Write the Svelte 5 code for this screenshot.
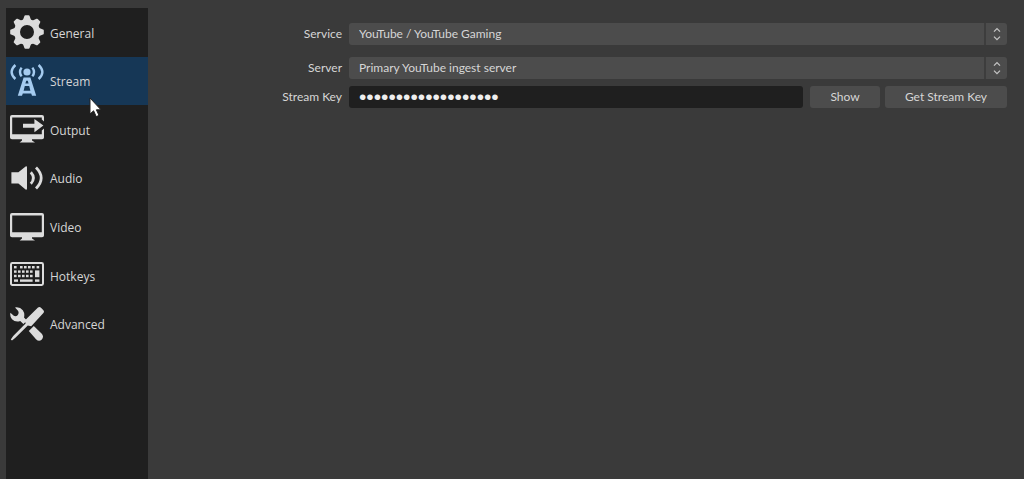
<script lang="ts">
  const sections = ['General', 'Stream', 'Output', 'Audio', 'Video', 'Hotkeys', 'Advanced'];

  let current = $state('Stream');
  let service = $state('YouTube / YouTube Gaming');
  let server = $state('Primary YouTube ingest server');
  let streamKey = $state('abcd-efgh-ijkl-mnop');
  let showKey = $state(false);

  const teeth = [0, 45, 90, 135, 180, 225, 270, 315];
  const keyRows = [
    [4, 10, 14, 18, 22, 26.6],
    [4, 8, 12, 16, 20],
    [4, 8, 12, 16, 20]
  ];
</script>

{#snippet icon(name: string)}
  <svg class="icon" viewBox="0 0 34 34" fill="currentColor" aria-hidden="true">
    {#if name === 'General'}
      <circle cx="17" cy="17" r="10" fill="none" stroke="currentColor" stroke-width="6" />
      {#each teeth as angle}
        <path d="M12.6 6 L14.4 1 Q14.6 0.2 15.4 0.2 H18.6 Q19.4 0.2 19.6 1 L21.4 6 Z" transform="rotate({angle} 17 17)" />
      {/each}
    {:else if name === 'Stream'}
      <circle cx="17" cy="8" r="3.6" />
      <g fill="none" stroke="currentColor" stroke-width="2.4">
        <path d="M11.6 3.6 Q8.4 8 11.6 12.4" />
        <path d="M22.4 3.6 Q25.6 8 22.4 12.4" />
        <path d="M5.4 1 Q-2.2 8 5.4 15" />
        <path d="M28.6 1 Q36.2 8 28.6 15" />
      </g>
      <path fill-rule="evenodd" d="M13.6 13.6 H20.4 L26.2 31.8 H22 L21.2 29.4 H12.8 L12 31.8 H7.8 Z M16.2 16.8 L15.4 19.6 H18.6 L17.8 16.8 Z M14.8 22 L13.6 26.8 H20.4 L19.2 22 Z" />
    {:else if name === 'Output'}
      <path fill-rule="evenodd" d="M2 3 H32 Q34 3 34 5 V9.4 L31.8 7.4 V5.4 H2.2 V22.2 H31.8 V18.4 L34 16.4 V25.6 Q34 27.2 32 27.2 H2 Q0 27.2 0 25.6 V5 Q0 3 2 3 Z" />
      <path d="M12 27 H22 V28.6 L25 30.6 H9.6 L12 28.6 Z" />
      <path d="M13 11.8 H24.4 V7 L33.4 13.6 L24.4 20.2 V15.8 H13 Z" />
    {:else if name === 'Audio'}
      <path d="M1.4 11.2 H8.4 L15.6 5.6 Q17 4.8 17 6.4 V27.6 Q17 29.2 15.6 28.4 L8.4 22.4 H1.4 Z" />
      <g fill="none" stroke="currentColor" stroke-width="2.8">
        <path d="M20.8 11.2 Q26 17 20.8 22.8" />
        <path d="M26 6.6 Q36.4 17 26 27.4" />
      </g>
    {:else if name === 'Video'}
      <path fill-rule="evenodd" d="M2 3 H32 Q34 3 34 5 V25.6 Q34 27.2 32 27.2 H2 Q0 27.2 0 25.6 V5 Q0 3 2 3 Z M2.2 5.4 V22.2 H31.8 V5.4 Z" />
      <path d="M12 27 H22 V28.6 L25 30.6 H9.6 L12 28.6 Z" />
    {:else if name === 'Hotkeys'}
      <rect x="1" y="5" width="32" height="22" rx="1.4" fill="none" stroke="currentColor" stroke-width="2" />
      {#each keyRows as row, i}
        {#each row as x}
          <rect {x} y={8 + i * 4.4} width="2.6" height="2.4" />
        {/each}
      {/each}
      <rect x="25" y="12.4" width="4.4" height="6.8" />
      <rect x="4" y="21.4" width="4" height="2.4" />
      <rect x="10" y="21.4" width="12.6" height="2.4" />
      <rect x="25" y="21.4" width="4.4" height="2.4" />
    {:else}
      <path d="M5 0.4 Q10 -0.4 12.8 3.2 Q15 6.4 14 10.4 L17 13.4 L13.4 17 L10.2 14 Q5.4 15.6 2 12.2 Q-0.4 9.4 0.4 5.8 L3.8 8.8 Q6 9.8 7.6 8.2 Q9.4 6.2 8 3.8 Z" />
      <path d="M18.8 24 L23.8 19 L32 27 Q34.2 30.2 31.6 32.8 Q28.8 35 26 32.2 Z" />
      <path d="M28 0.6 Q29.6 -0.6 31 0.8 L33.4 3.2 Q34.6 4.6 33.4 6 L21.2 19.2 L17.8 18.4 L5.4 30.8 L2 33.6 L0.8 32.4 L3.2 29 L15.6 16.4 L14.8 13.6 Z" />
    {/if}
  </svg>
{/snippet}

{#snippet arrows()}
  <span class="arrows">
    <svg viewBox="0 0 8 14" aria-hidden="true">
      <path d="M1 4.6 L4 1.6 L7 4.6 M1 9.6 L4 12.6 L7 9.6" />
    </svg>
  </span>
{/snippet}

<div class="settings">
  <nav>
    <div class="tabs">
      {#each sections as name}
        <button class="tab" class:active={current === name} onclick={() => (current = name)}>
          {@render icon(name)}
          <span>{name}</span>
          {#if name === 'Stream'}
            <svg class="pointer" viewBox="0 0 13 21" aria-hidden="true">
              <path d="M1 1 V17 L4.6 13.8 L7.2 19.6 L10 18.4 L7.4 12.8 H12 Z" />
            </svg>
          {/if}
        </button>
      {/each}
    </div>
  </nav>

  <main>
    <div class="row service">
      <label for="service">Service</label>
      <div class="combo">
        <select id="service" bind:value={service}>
          <option>YouTube / YouTube Gaming</option>
        </select>
        {@render arrows()}
      </div>
    </div>
    <div class="row server">
      <label for="server">Server</label>
      <div class="combo">
        <select id="server" bind:value={server}>
          <option>Primary YouTube ingest server</option>
        </select>
        {@render arrows()}
      </div>
    </div>
    <div class="row">
      <label for="key">Stream Key</label>
      <div class="key">
        <input id="key" class:hidden={!showKey} type={showKey ? 'text' : 'password'} bind:value={streamKey} />
        <button class="show" onclick={() => (showKey = !showKey)}>Show</button>
        <button class="get">Get Stream Key</button>
      </div>
    </div>
  </main>
</div>

<style>
  :global(body) {
    margin: 0;
    background: #3a3a3a;
  }

  .settings {
    display: flex;
    box-sizing: border-box;
    min-height: 100vh;
    padding: 8px 17px 0 6px;
    color: #d6d6d6;
    font: 12px/16px 'Open Sans', 'Noto Sans', sans-serif;
  }

  button,
  select,
  input {
    box-sizing: border-box;
    margin: 0;
    border: none;
    color: inherit;
    font: inherit;
  }

  nav {
    flex: none;
    width: 142px;
    background: #1f1f1f;
  }

  .tabs {
    display: grid;
    grid-template-rows: repeat(7, 1fr);
    height: 340px;
  }

  .tab {
    position: relative;
    display: flex;
    align-items: center;
    gap: 6px;
    padding: 0 4px;
    background: none;
    text-align: left;
  }

  .tab span {
    padding-top: 3px;
  }

  .tab.active {
    background: #163756;
  }

  .icon {
    flex: none;
    width: 34px;
    height: 34px;
    color: #dcdcdc;
  }

  .active .icon {
    color: #a5cbef;
  }

  .pointer {
    position: absolute;
    z-index: 1;
    left: 83px;
    top: 40px;
    width: 13px;
    height: 21px;
    fill: #fff;
    stroke: #222;
    stroke-width: 1;
  }

  main {
    flex: 1;
    padding-top: 15px;
    font-family: Lato, 'Open Sans', sans-serif;
  }

  .row {
    display: grid;
    grid-template-columns: 194px 1fr;
    align-items: center;
    column-gap: 7px;
  }

  .service {
    margin-bottom: 12px;
  }

  .server {
    margin-bottom: 7px;
  }

  label {
    text-align: right;
  }

  .combo {
    position: relative;
    display: flex;
  }

  select {
    appearance: none;
    width: 100%;
    height: 22px;
    padding: 0 32px 0 10px;
    border-radius: 3px;
    background: #4c4c4c;
  }

  .arrows {
    position: absolute;
    top: 0;
    right: 0;
    bottom: 0;
    display: flex;
    align-items: center;
    justify-content: center;
    width: 21px;
    border-left: 2px solid #3d3d3d;
    pointer-events: none;
  }

  .arrows svg {
    width: 8px;
    height: 14px;
    fill: none;
    stroke: #c4c4c4;
    stroke-width: 1.3;
  }

  .key {
    display: flex;
  }

  input {
    flex: 1;
    min-width: 0;
    height: 22px;
    margin-right: 7px;
    padding: 0 10px;
    border-radius: 3px;
    background: #1f1f1f;
    color: #eee;
  }

  input.hidden {
    font-family: 'Liberation Sans', sans-serif;
    font-size: 21px;
  }

  .show,
  .get {
    height: 22px;
    padding: 0;
    border-radius: 3px;
    background: #4c4c4c;
  }

  .show {
    width: 70px;
    margin-right: 5px;
  }

  .get {
    width: 122px;
  }
</style>
